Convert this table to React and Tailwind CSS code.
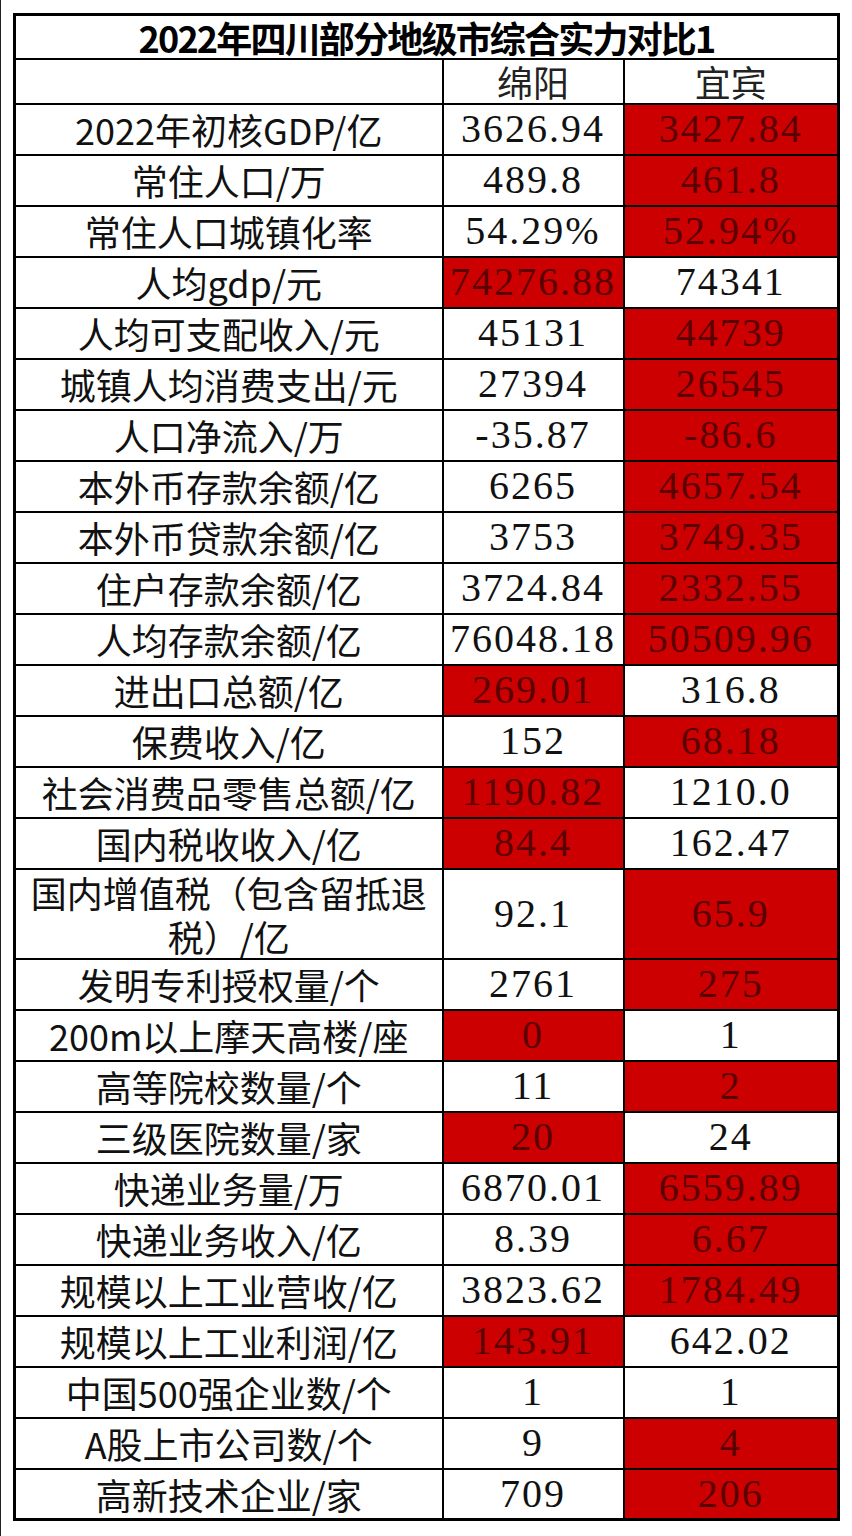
import React from 'react'

const rows = [
  ['2022年初核GDP/亿', '3626.94', '3427.84', 'R'],
  ['常住人口/万', '489.8', '461.8', 'R'],
  ['常住人口城镇化率', '54.29%', '52.94%', 'R'],
  ['人均gdp/元', '74276.88', '74341', 'L'],
  ['人均可支配收入/元', '45131', '44739', 'R'],
  ['城镇人均消费支出/元', '27394', '26545', 'R'],
  ['人口净流入/万', '-35.87', '-86.6', 'R'],
  ['本外币存款余额/亿', '6265', '4657.54', 'R'],
  ['本外币贷款余额/亿', '3753', '3749.35', 'R'],
  ['住户存款余额/亿', '3724.84', '2332.55', 'R'],
  ['人均存款余额/亿', '76048.18', '50509.96', 'R'],
  ['进出口总额/亿', '269.01', '316.8', 'L'],
  ['保费收入/亿', '152', '68.18', 'R'],
  ['社会消费品零售总额/亿', '1190.82', '1210.0', 'L'],
  ['国内税收收入/亿', '84.4', '162.47', 'L'],
  ['国内增值税（包含留抵退|税）/亿', '92.1', '65.9', 'R'],
  ['发明专利授权量/个', '2761', '275', 'R'],
  ['200m以上摩天高楼/座', '0', '1', 'L'],
  ['高等院校数量/个', '11', '2', 'R'],
  ['三级医院数量/家', '20', '24', 'L'],
  ['快递业务量/万', '6870.01', '6559.89', 'R'],
  ['快递业务收入/亿', '8.39', '6.67', 'R'],
  ['规模以上工业营收/亿', '3823.62', '1784.49', 'R'],
  ['规模以上工业利润/亿', '143.91', '642.02', 'L'],
  ['中国500强企业数/个', '1', '1', ''],
  ['A股上市公司数/个', '9', '4', 'R'],
  ['高新技术企业/家', '709', '206', 'R'],
]

const cjk = { fontFamily: '"Noto Sans CJK SC", "Noto Sans", sans-serif' }
const num = { fontFamily: '"Liberation Serif", serif' }

const ValueCell = ({ value, red }) => (
  <td
    className={
      'border-2 border-black text-center text-[40px] leading-none tracking-[2px] ' +
      (red ? 'bg-[#cc0000] text-[#5a0000]' : 'bg-white text-[#111]')
    }
    style={num}
  >
    {value}
  </td>
)

const App = () => {
  return (
    <div className="min-h-screen border-l border-[#222] bg-white pt-[13px] pl-[12px]">
      <table className="w-[824px] table-fixed border-collapse border-[3px] border-black" style={cjk}>
        <colgroup>
          <col className="w-[428px]" />
          <col className="w-[181px]" />
          <col className="w-[215px]" />
        </colgroup>
        <tbody>
          <tr className="h-[44px]">
            <td colSpan={3} className="border-2 border-black text-center text-[36px] font-bold leading-none tracking-tighter text-black">
              2022年四川部分地级市综合实力对比1
            </td>
          </tr>
          <tr className="h-[45px]">
            <td className="border-2 border-black"></td>
            <td className="border-2 border-black text-center text-[36px] leading-none text-[#222]">绵阳</td>
            <td className="border-2 border-black text-center text-[36px] leading-none text-[#222]">宜宾</td>
          </tr>
          {rows.map(([label, a, b, red]) => {
            const lines = label.split('|')
            return (
              <tr key={label} className={lines.length > 1 ? 'h-[90px]' : 'h-[51px]'}>
                <td className="border-2 border-black px-1 text-center text-[36px] leading-[44px] text-[#111]">
                  {lines.map((l, i) => (
                    <div key={i}>{l}</div>
                  ))}
                </td>
                <ValueCell value={a} red={red === 'L'} />
                <ValueCell value={b} red={red === 'R'} />
              </tr>
            )
          })}
        </tbody>
      </table>
    </div>
  )
}

export default App
